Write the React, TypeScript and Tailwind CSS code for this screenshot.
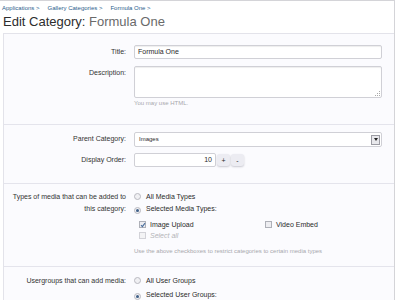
import type { ReactNode } from 'react'

function Row({ label, children, className = '' }: { label: ReactNode; children: ReactNode; className?: string }) {
  return (
    <div className={`flex ${className}`}>
      <div className="w-[127px] shrink-0 pr-[5px] text-right text-[#333] leading-[12px] pt-[1px]">{label}</div>
      <div className="flex-1 pl-[3px] pr-[12px]">{children}</div>
    </div>
  )
}

function Radio({ on }: { on?: boolean }) {
  return (
    <span className="inline-grid place-items-center w-[7px] h-[7px] rounded-full border border-[#b9b9c0] bg-[#f0f0f3] mr-[5px] align-[-1px]">
      {on && <span className="w-[3px] h-[3px] rounded-full bg-[#3f5f88]" />}
    </span>
  )
}

function Check({ on, dim }: { on?: boolean; dim?: boolean }) {
  return (
    <span className={`inline-grid place-items-center w-[7px] h-[7px] border ${dim ? 'border-[#d2d2d8] bg-[#f3f3f5]' : 'border-[#aeb0b8] bg-[#ededf1]'} mr-[4px] align-[-1px]`}>
      {on && (
        <svg width="6" height="6" viewBox="0 0 6 6">
          <path d="M1 3.2 L2.4 4.6 L5 1.2" stroke="#4b6f9e" strokeWidth="1.1" fill="none" />
        </svg>
      )}
    </span>
  )
}

export default function App() {
  return (
    <div className="w-[395px] h-[300px] overflow-hidden bg-white border-t border-r border-[#d4d4d8] text-[7px] text-[#2a2a2a]" style={{ fontFamily: "'Liberation Sans', Arial, sans-serif" }}>
      <div className="px-[2px] pt-[3px] h-[11px] text-[6px] leading-[9px] text-[#2b5d8c] flex gap-[8px]">
        <span>Applications &gt;</span>
        <span>Gallery Categories &gt;</span>
        <span>Formula One &gt;</span>
      </div>
      <h1 className="px-[3px] pt-[1px] text-[13px] leading-[18px] text-[#2d2d2d] h-[19px]">
        Edit Category: <span className="text-[#6a6a6a]">Formula One</span>
      </h1>
      <div className="ml-[3px] mt-[2px] border-t border-l border-[#e3e3ea] bg-[#fbfbfe]">
        <div className="pt-[11px] pb-[16px]">
          <Row label="Title:">
            <div className="h-[14px] w-full rounded-[2px] border border-[#d0d0d6] bg-white px-[3px] leading-[12px] shadow-[inset_0_1px_1px_#eee]">Formula One</div>
          </Row>
          <Row label="Description:" className="mt-[7px]">
            <div className="relative h-[32px] w-full rounded-[2px] border border-[#d0d0d6] bg-white shadow-[inset_0_1px_1px_#eee]">
              <svg className="absolute right-[1px] bottom-[1px]" width="5" height="5" viewBox="0 0 5 5">
                <rect x="4" y="0" width="1" height="1" fill="#aaa" />
                <rect x="2" y="2" width="1" height="1" fill="#aaa" />
                <rect x="4" y="2" width="1" height="1" fill="#aaa" />
                <rect x="0" y="4" width="1" height="1" fill="#aaa" />
                <rect x="2" y="4" width="1" height="1" fill="#aaa" />
                <rect x="4" y="4" width="1" height="1" fill="#aaa" />
              </svg>
            </div>
            <div className="mt-[1px] text-[6px] leading-[9px] text-[#a8a8ad]">You may use HTML.</div>
          </Row>
        </div>
        <div className="border-t border-[#e4e4ec] pt-[7px] pb-[16px]">
          <Row label="Parent Category:">
            <div className="h-[15px] w-full rounded-[2px] border border-[#d0d0d6] bg-white pl-[4px] pr-[1px] flex items-center justify-between">
              <span className="text-[6px]">Images</span>
              <span className="w-[9px] h-[10px] border border-[#9c9ca4] bg-[#e8e8ec] grid place-items-center">
                <span className="w-0 h-0 border-l-[2.5px] border-r-[2.5px] border-t-[3px] border-l-transparent border-r-transparent border-t-[#222]" />
              </span>
            </div>
          </Row>
          <Row label="Display Order:" className="mt-[6px]">
            <div className="flex items-center gap-[1px]">
              <div className="h-[14px] w-[82px] rounded-[2px] border border-[#d0d0d6] bg-white pr-[3px] text-right leading-[12px]">10</div>
              <div className="h-[12px] w-[13px] rounded-[3px] bg-[#ececf2] shadow-[0_1px_2px_#c8c8d0] grid place-items-center text-[7px] leading-none">+</div>
              <div className="h-[12px] w-[13px] rounded-[3px] bg-[#ececf2] shadow-[0_1px_2px_#c8c8d0] grid place-items-center text-[7px] leading-none">-</div>
            </div>
          </Row>
        </div>
        <div className="border-t border-[#e4e4ec] pt-[6px] pb-[10px]">
          <Row label={<>Types of media that can be added to<br />this category:</>}>
            <div className="leading-[12px] pt-[1px]"><Radio />All Media Types</div>
            <div className="leading-[12px]"><Radio on />Selected Media Types:</div>
            <div className="pl-[5px] mt-[4px] grid grid-cols-[126px_1fr] leading-[11px]">
              <div><Check on />Image Upload</div>
              <div><Check />Video Embed</div>
              <div className="italic text-[#b4b4b8]"><Check dim />Select all</div>
            </div>
            <div className="mt-[6px] text-[6px] leading-[9px] text-[#a8a8ad]">Use the above checkboxes to restrict categories to certain media types</div>
          </Row>
        </div>
        <div className="border-t border-[#e4e4ec] pt-[7px] pb-[10px]">
          <Row label="Usergroups that can add media:">
            <div className="leading-[12px] pt-[1px]"><Radio />All User Groups</div>
            <div className="leading-[12px] mt-[2px]"><Radio on />Selected User Groups:</div>
          </Row>
        </div>
      </div>
    </div>
  )
}
